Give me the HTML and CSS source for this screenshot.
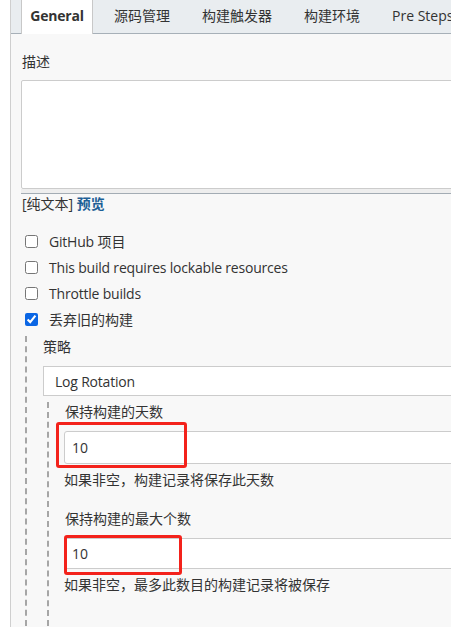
FILE: index.html
```html
<!DOCTYPE html>
<html lang="zh-CN">
<head>
    <meta charset="UTF-8">
    <meta name="viewport" content="width=device-width, initial-scale=1.0">
    <title>General</title>
    <link rel="stylesheet" href="styles.css">
</head>
<body>
    <div class="page">
        <nav class="tabbar">
            <a class="tab active">General</a>
            <a class="tab">源码管理</a>
            <a class="tab">构建触发器</a>
            <a class="tab">构建环境</a>
            <a class="tab">Pre Steps</a>
        </nav>

        <div class="config">
            <div class="field-label">描述</div>
            <textarea class="description"></textarea>
            <div class="textarea-handle"></div>
            <div class="preview-line">[纯文本] <a class="preview">预览</a></div>

            <div class="options">
                <label class="check-row"><input type="checkbox"><span><span class="latin">GitHub</span> 项目</span></label>
                <label class="check-row"><input type="checkbox"><span class="latin">This build requires lockable resources</span></label>
                <label class="check-row"><input type="checkbox"><span class="latin">Throttle builds</span></label>
                <label class="check-row"><input type="checkbox" checked><span>丢弃旧的构建</span></label>
            </div>

            <div class="optional-block">
                <div class="field-label">策略</div>
                <div class="select-box">Log Rotation</div>

                <div class="optional-block inner">
                    <div class="field-label">保持构建的天数</div>
                    <div class="input-wrap">
                        <input class="text-input" type="text" value="10">
                        <span class="mark mark-days"></span>
                    </div>
                    <div class="help">如果非空，构建记录将保存此天数</div>

                    <div class="field-label spaced">保持构建的最大个数</div>
                    <div class="input-wrap">
                        <input class="text-input short" type="text" value="10">
                        <span class="mark mark-count"></span>
                    </div>
                    <div class="help">如果非空，最多此数目的构建记录将被保存</div>
                </div>
            </div>
        </div>
    </div>
</body>
</html>
```

FILE: styles.css
```css
html, body {
    margin: 0;
    padding: 0;
    background: #fff;
    overflow: hidden;
}

body {
    font-family: "Open Sans", "Noto Sans CJK SC", sans-serif;
    font-size: 14px;
    color: #333;
}

.latin {
    letter-spacing: -0.2px;
}

.page {
    margin-left: 10px;
    border-left: 1px solid #cfcfcf;
    background: #f8f8f8;
    height: 100vh;
    width: 640px;
}

/* tabs */
.tabbar {
    display: flex;
    height: 33px;
    background: #e9edf0;
    border-bottom: 1px solid #a7b0b8;
    padding-left: 10px;
}

.tab {
    display: flex;
    align-items: center;
    padding: 0 16px 3px;
    white-space: nowrap;
    color: #333;
}

.tab.active {
    width: 72px;
    padding: 0 0 3px;
    justify-content: center;
    background: #fff;
    font-weight: bold;
    letter-spacing: -0.2px;
    border-left: 1px solid #c8c8c8;
    border-right: 1px solid #c8c8c8;
    margin-bottom: -1px;
    margin-right: 5px;
    box-sizing: border-box;
}

/* form */
.config {
    padding: 18px 0 0 10px;
}

.field-label {
    line-height: 20px;
    margin-left: 1px;
}

.description {
    display: block;
    box-sizing: border-box;
    width: 100%;
    height: 109px;
    margin: 8px 0 0;
    border: 1px solid #cccccc;
    border-radius: 2px;
    background: #fff;
    resize: none;
}

.textarea-handle {
    height: 4px;
    background: #eeeeee;
    border-bottom: 1px solid #a3acb4;
}

.preview-line {
    line-height: 20px;
    margin-left: 1px;
}

.preview {
    color: #1d5f96;
    font-weight: bold;
}

.options {
    margin-top: 14px;
}

.check-row {
    display: flex;
    align-items: center;
    height: 26px;
    gap: 8px;
}

.check-row input {
    width: 13px;
    height: 13px;
    margin: 0 3px 0 4px;
    accent-color: #0b66e4;
}

.optional-block {
    margin: 4px 0 0 4px;
    padding: 1px 0 0 15px;
    border-left: 2px dashed #a6a6a6;
}

.optional-block .select-box {
    margin-top: 9px;
    margin-left: 1px;
    height: 30px;
    box-sizing: border-box;
    border: 1px solid #cccccc;
    background: #fff;
    padding: 0 11px;
    line-height: 30px;
    letter-spacing: -0.2px;
    overflow: hidden;
}

.optional-block.inner {
    margin: 6px 0 0 5px;
    padding-left: 15px;
    padding-top: 0;
    height: 224px;
    box-sizing: border-box;
}

.spaced {
    margin-top: 19px;
}

.input-wrap {
    position: relative;
    margin-top: 9px;
}

.text-input {
    display: block;
    box-sizing: border-box;
    width: 100%;
    height: 33px;
    margin: 0;
    padding: 0 7px;
    border: 1px solid #cccccc;
    border-radius: 3px;
    background: #fff;
    font: inherit;
    color: #333;
}

.text-input.short {
    height: 31px;
}

.help {
    margin-top: 6px;
    line-height: 20px;
}

/* red annotation boxes drawn over the screenshot */
.mark {
    position: absolute;
    border: 3px solid #f3221b;
    border-radius: 3px;
    box-sizing: border-box;
}

.mark-days {
    left: -8px;
    top: -9px;
    width: 131px;
    height: 46px;
}

.mark-count {
    left: 0;
    top: -3px;
    width: 118px;
    height: 40px;
}
```
